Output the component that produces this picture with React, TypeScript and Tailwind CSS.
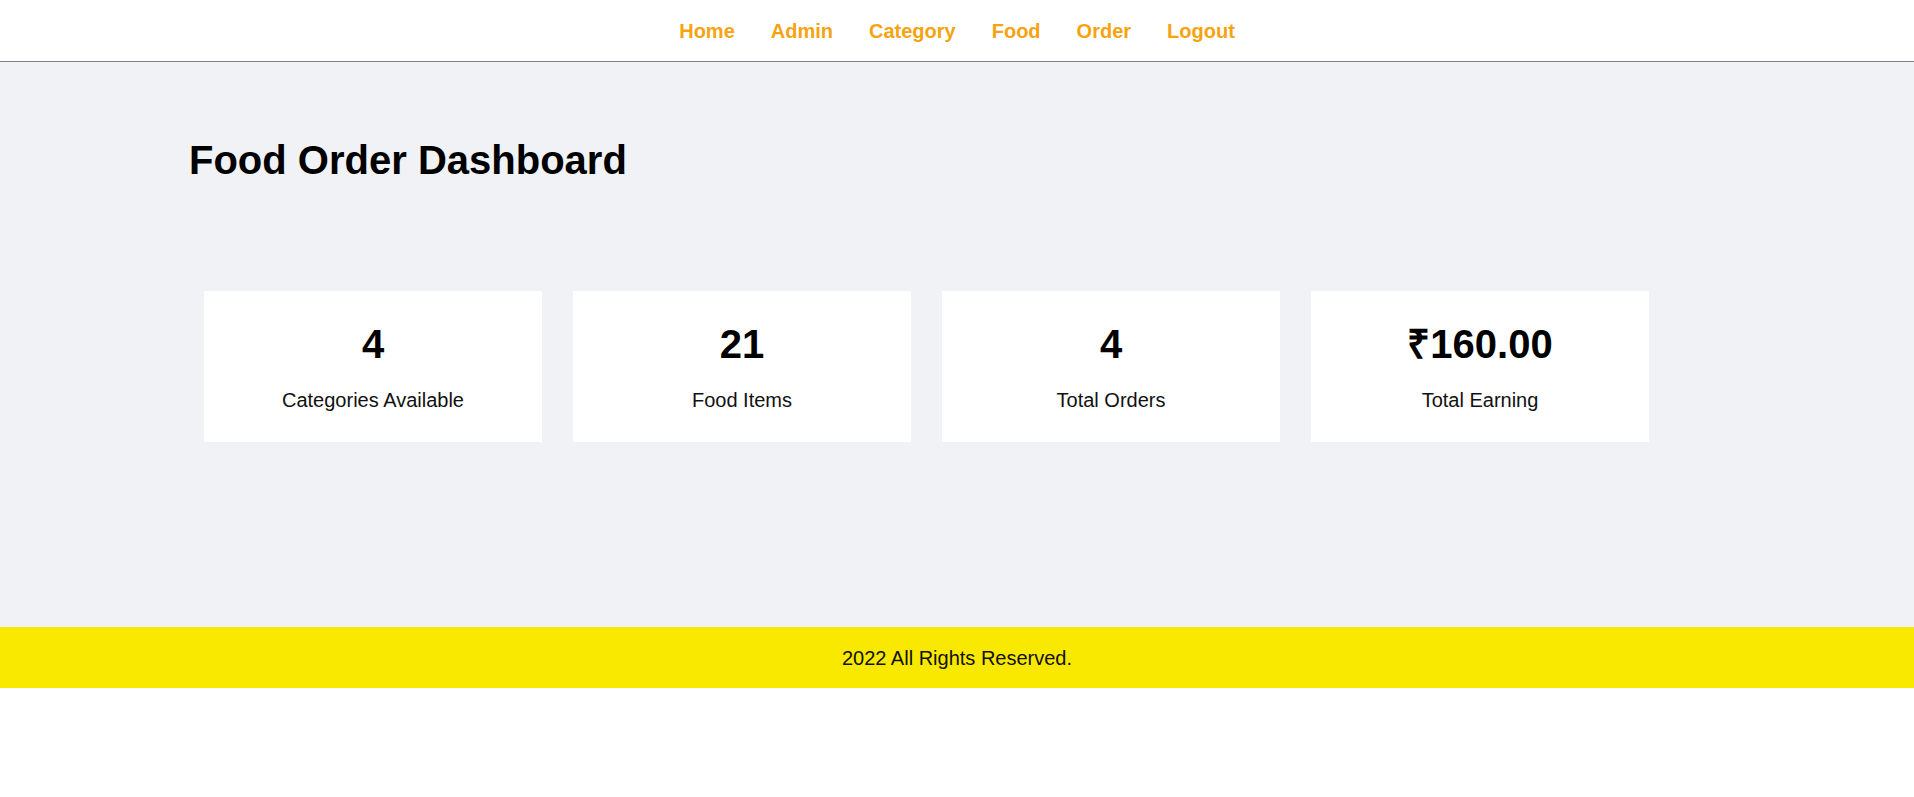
const links = ['Home', 'Admin', 'Category', 'Food', 'Order', 'Logout']

const stats = [
  { value: '4', label: 'Categories Available' },
  { value: '21', label: 'Food Items' },
  { value: '4', label: 'Total Orders' },
  { value: '₹160.00', label: 'Total Earning' },
]

export default function App() {
  return (
    <div className="min-h-screen bg-white font-['Liberation_Sans',Arial,sans-serif] text-black">
      <nav className="flex h-[62px] items-center justify-center gap-9 border-b border-[#808080]">
        {links.map((l) => (
          <a key={l} href="#" className="text-[20px] font-bold leading-none text-[#f6a312]">
            {l}
          </a>
        ))}
      </nav>

      <main className="h-[565px] bg-[#f0f2f5] pt-[78px]">
        <div className="mx-auto max-w-[1536px]">
          <h1 className="text-[40px] font-bold leading-none">Food Order Dashboard</h1>

          <div className="mt-[111px] flex gap-[31px] pl-[15px]">
            {stats.map((s) => (
              <div
                key={s.label}
                className="flex w-[338px] flex-col items-center gap-[26px] bg-white pt-[33px] pb-[32px]">
                <p className="text-[40px] font-bold leading-none">{s.value}</p>
                <p className="text-[20px] leading-none text-[#111]">{s.label}</p>
              </div>
            ))}
          </div>
        </div>
      </main>

      <footer className="flex h-[61px] items-center justify-center bg-[#f9e900]">
        <p className="text-[20px] leading-none text-[#111]">2022 All Rights Reserved.</p>
      </footer>
    </div>
  )
}
